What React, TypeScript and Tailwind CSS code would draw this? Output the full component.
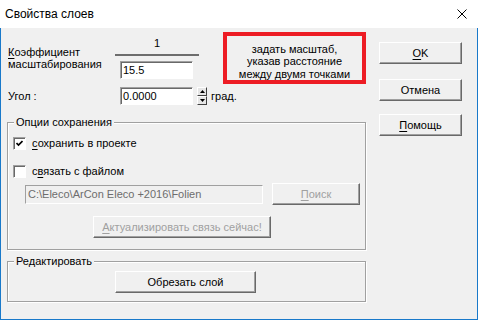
import type { ReactNode } from "react";

type BoxProps = {
	className?: string;
	children?: ReactNode;
	disabled?: boolean;
};

const U = ({ children }: { children: string }) => (
	<span className="underline decoration-1 underline-offset-[2px]">{children}</span>
);

const Btn = ({ className = "", children, disabled }: BoxProps) => (
	<button
		type="button"
		className={`shrink-0 flex items-center justify-center border border-t-white border-l-white border-b-[#696969] border-r-[#696969] bg-[#f0f0f0] shadow-[inset_-1px_-1px_0_#a0a0a0] leading-none ${
			disabled ? "text-[#a0a0a0]" : "text-black"
		} ${className}`}
	>
		{children}
	</button>
);

const Field = ({ className = "", children, disabled }: BoxProps) => (
	<div
		className={`shrink-0 flex items-center pl-[2px] border border-t-[#a0a0a0] border-l-[#a0a0a0] border-b-white border-r-white whitespace-nowrap overflow-hidden ${
			disabled
				? "bg-[#f0f0f0] text-[#6d6d6d]"
				: "bg-white shadow-[inset_1px_1px_0_#696969]"
		} ${className}`}
	>
		{children}
	</div>
);

const Check = ({ checked }: { checked?: boolean }) => (
	<div className="w-[13px] h-[13px] shrink-0 flex items-center justify-center bg-white border border-t-[#a0a0a0] border-l-[#a0a0a0] border-b-white border-r-white shadow-[inset_1px_1px_0_#696969]">
		{checked && (
			<svg width="7" height="7" viewBox="0 0 7 7">
				<path d="M0.5 3 L2.5 5 L6.5 1" fill="none" stroke="#000" strokeWidth="1.7" />
			</svg>
		)}
	</div>
);

const SpinBtn = ({ up }: { up?: boolean }) => (
	<div className="h-[9px] flex items-center justify-center bg-[#e6e6e6] border border-t-white border-l-white border-b-[#404040] border-r-[#404040]">
		<svg width="5" height="3" viewBox="0 0 5 3">
			<path d={up ? "M2.5 0 L5 3 L0 3 Z" : "M0 0 L5 0 L2.5 3 Z"} fill="#000" />
		</svg>
	</div>
);

const Group = ({ title, className = "", children }: { title: string; className?: string; children: ReactNode }) => (
	<fieldset className={`border border-[#a0a0a0] shadow-[inset_1px_1px_0_white,1px_1px_0_white] ${className}`}>
		<legend className="ml-[6px] px-[2px] leading-[14px] bg-[#f0f0f0]">{title}</legend>
		{children}
	</fieldset>
);

export default function App() {
	return (
		<div className="w-[478px] h-[321px] flex flex-col bg-white text-[11px] text-black font-['Liberation_Sans',Arial,sans-serif]">
			<div className="h-[28px] flex items-center justify-between pl-[5px] pr-[11px] text-[12px]">
				<span>Свойства слоев</span>
				<svg width="10" height="10" viewBox="0 0 10 10">
					<path d="M0.5 0.5 L9.5 9.5 M9.5 0.5 L0.5 9.5" stroke="#000" strokeWidth="1" />
				</svg>
			</div>

			<div className="h-[292px] flex pl-[6px] pt-[4px] bg-[#f0f0f0] border-x border-b border-[#1979ca]">
				<div className="w-[359px] shrink-0 flex flex-col">
					<div className="flex">
						<div className="w-[216px] shrink-0 flex flex-col">
							<div className="flex">
								<div className="w-[108px] shrink-0 pl-[1px] mt-[14px] leading-[12px]">
									<div>
										<U>К</U>оэффициент
									</div>
									<div>масштабирования</div>
								</div>
								<div className="w-[84px] shrink-0 flex flex-col">
									<div className="mt-[5px] h-[13px] leading-[13px] text-center">1</div>
									<div className="mt-[4px] h-[2px] bg-[#6d6d6d]" />
									<Field className="mt-[5px] ml-[5px] w-[73px] h-[18px]">15.5</Field>
								</div>
							</div>
							<div className="mt-[8px] h-[18px] flex items-center">
								<div className="w-[113px] shrink-0 pl-[1px]">Угол :</div>
								<Field className="w-[73px] h-[18px]">0.0000</Field>
								<div className="ml-[4px] w-[10px] h-[18px] shrink-0 flex flex-col">
									<SpinBtn up />
									<SpinBtn />
								</div>
								<span className="ml-[4px] shrink-0 whitespace-nowrap">град.</span>
							</div>
						</div>
						<div className="w-[143px] h-[52px] shrink-0 pt-[7px] flex flex-col items-center justify-center border-4 border-[#ed1c24] leading-[12.5px] text-center">
							<div>задать масштаб,</div>
							<div>указав расстояние</div>
							<div>между двумя точками</div>
						</div>
					</div>

					<Group title="Опции сохранения" className="mt-[10px]">
						<div className="flex flex-col pl-[5px] pb-[11px]">
							<div className="mt-[8px] h-[13px] flex items-center">
								<Check checked />
								<span className="ml-[6px]">
									<U>с</U>охранить в проекте
								</span>
							</div>
							<div className="mt-[15px] h-[13px] flex items-center">
								<Check />
								<span className="ml-[6px]">
									с<U>в</U>язать с файлом
								</span>
							</div>
							<div className="mt-[5px] h-[22px] flex items-center">
								<Field disabled className="ml-[12px] w-[238px] h-[19px]">
									C:\Eleco\ArCon Eleco +2016\Folien
								</Field>
								<Btn disabled className="ml-[9px] w-[88px] h-[22px]">
									<U>П</U>оиск
								</Btn>
							</div>
							<Btn disabled className="mt-[11px] ml-[80px] w-[178px] h-[22px]">
								<U>А</U>ктуализировать связь сейчас!
							</Btn>
						</div>
					</Group>

					<Group title="Редактировать" className="mt-[4px]">
						<div className="flex pt-[3px] pb-[8px]">
							<Btn className="ml-[107px] w-[141px] h-[22px]">Обрезать слой</Btn>
						</div>
					</Group>
				</div>

				<div className="ml-[13px] w-[83px] shrink-0 flex flex-col">
					<Btn className="mt-[10px] h-[22px]">
						<U>О</U>K
					</Btn>
					<Btn className="mt-[15px] h-[22px]">Отмена</Btn>
					<Btn className="mt-[13px] h-[22px]">
						<U>П</U>омощь
					</Btn>
				</div>
			</div>
		</div>
	);
}
